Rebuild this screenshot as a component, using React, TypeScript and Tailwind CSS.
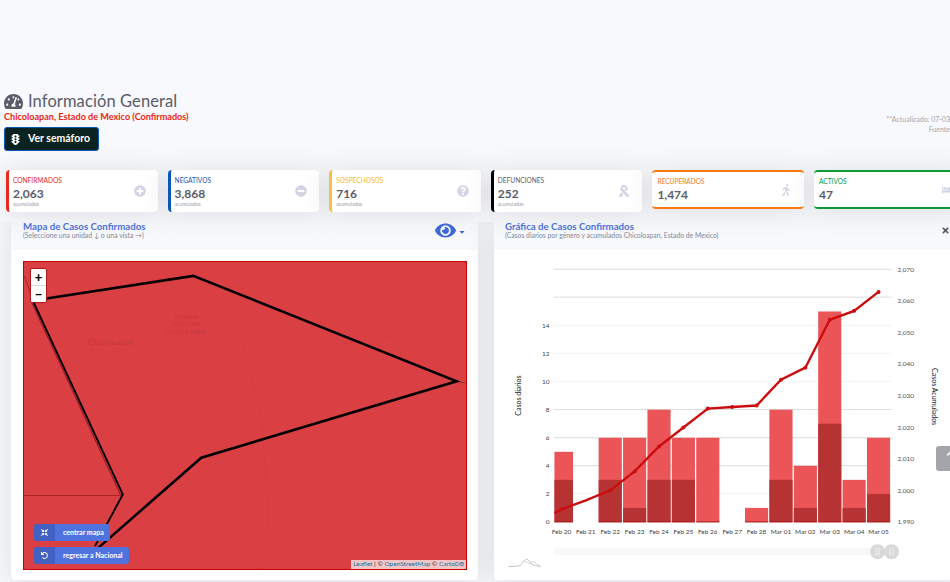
import {
  FaBed,
  FaCaretDown,
  FaChevronUp,
  FaCompressArrowsAlt,
  FaEye,
  FaMinusCircle,
  FaPlusCircle,
  FaQuestionCircle,
  FaRibbon,
  FaTachometerAlt,
  FaTimes,
  FaTrafficLight,
  FaUndo,
  FaWalking,
} from 'react-icons/fa';

const cards = [
  { label: 'CONFIRMADOS', value: '2,063', foot: 'acumulados', icon: FaPlusCircle, box: 'border-l-[3px] border-l-[#e8291c] pl-[4px]', text: 'text-[#e8291c]' },
  { label: 'NEGATIVOS', value: '3,868', foot: 'acumulados', icon: FaMinusCircle, box: 'border-l-[3px] border-l-[#0b57b8] pl-[4px]', text: 'text-[#0b57b8]' },
  { label: 'SOSPECHOSOS', value: '716', foot: 'acumulados', icon: FaQuestionCircle, box: 'border-l-[3px] border-l-[#f6c23e] pl-[4px]', text: 'text-[#f6b92e]' },
  { label: 'DEFUNCIONES', value: '252', foot: 'acumuladas', icon: FaRibbon, box: 'border-l-[3px] border-l-black pl-[4px]', text: 'text-[#5a5c69]' },
  { label: 'RECUPERADOS', value: '1,474', icon: FaWalking, box: 'border-y-2 border-[#fb7a0c] pl-[5px]', text: 'text-[#fb7a0c]' },
  { label: 'ACTIVOS', value: '47', icon: FaBed, box: 'border-y-2 border-[#0a9a3c] pl-[5px]', text: 'text-[#0a9a3c]' },
];

const days = ['Feb 20', 'Feb 21', 'Feb 22', 'Feb 23', 'Feb 24', 'Feb 25', 'Feb 26', 'Feb 27', 'Feb 28', 'Mar 01', 'Mar 02', 'Mar 03', 'Mar 04', 'Mar 05'];
const totals = [5, 0, 6, 6, 8, 6, 6, 0, 1, 8, 4, 15, 3, 6];
const darks = [3, 0, 3, 1, 3, 3, 0, 0, 0, 3, 1, 7, 1, 2];
const lineY = [510, 501, 491, 472, 447, 428, 409, 407.5, 406, 380, 368, 320, 311, 292];
const gridY = [269.3, 297.3, 325.7, 353.7, 381.7, 410, 438.3, 466.3, 494.3];
const rightAxis = ['2,070', '2,060', '2,050', '2,040', '2,030', '2,020', '2,010', '2,000', '1,990'];

const baseY = 522.7;
const unit = 14.07;
const centerX = (i: number) => 561 + i * 24.46;

function StatCard({ card }: { card: (typeof cards)[number] }) {
  const Icon = card.icon;
  return (
    <div className={`flex w-[151.6px] shrink-0 items-center justify-between self-start rounded-[4px] bg-white pr-[12px] shadow-[0_2px_28px_rgba(58,59,69,0.15)] ${card.foot ? 'h-[42px]' : 'h-[39px]'} ${card.box}`}>
      <div className="flex flex-col">
        <span className={`text-[6.6px] font-normal leading-[9px] ${card.text}`}>{card.label}</span>
        <span className="mt-[2px] text-[12px] font-bold leading-[14px] text-[#5a5c69]">{card.value}</span>
        {card.foot && <span className="text-[5px] leading-[6px] text-[#9a9ba5]">{card.foot}</span>}
      </div>
      <Icon className="text-[12px] text-[#d4d5e4]" />
    </div>
  );
}

function MapDrawing() {
  return (
    <svg viewBox="23 261 444 309" className="absolute inset-0 h-full w-full">
      <g fill="none" stroke="#000" strokeOpacity="0.03" strokeWidth="1">
        <path d="M37 325 L105 290" />
        <path d="M23 400 L65 360" />
        <path d="M195 262 L240 330 L262 420 L270 540" />
        <path d="M300 350 L400 335 L467 380" />
        <path d="M290 480 L330 470 L262 570" />
        <path d="M370 470 L467 500" />
      </g>
      <path d="M23 496 L122 496" stroke="#a82226" strokeWidth="1" fill="none" />
      <path d="M23 275 L31 298" stroke="#a82226" strokeWidth="1" fill="none" />
      <path d="M458 381 L467 383" stroke="#8a3436" strokeWidth="1" fill="none" />
      <path d="M30 299 L121 496" stroke="#8f1418" strokeWidth="1" fill="none" transform="translate(-1 0)" />
      <path d="M30.5 300 L193 275 L458 381 L201 458 L97 549" stroke="#000" strokeWidth="2.6" fill="none" />
      <path d="M30.5 298 L122 495 L94 547" stroke="#000" strokeWidth="1.9" fill="none" />
      <g fill="#000" fillOpacity="0.14" fontFamily="Lato, sans-serif" textAnchor="middle">
        <text x="110" y="345" fontSize="8.5">Chicoloapan</text>
        <text x="186" y="318" fontSize="6.5">CIUDAD</text>
        <text x="186" y="325" fontSize="6.5">GALAXIA</text>
        <text x="186" y="333" fontSize="6.5">(CASAS SARE)</text>
      </g>
    </svg>
  );
}

function CaseChart() {
  return (
    <svg viewBox="494 250 456 331" className="block h-[331px] w-[456px]" fontFamily="Lato, sans-serif">
      {gridY.map((y, i) => (
        <line key={y} x1="553" x2="892" y1={y} y2={y} stroke={[2, 3, 4, 8].includes(i) ? '#f3f3f3' : '#dcdcdc'} strokeWidth="1" />
      ))}
      {days.map((day, i) => {
        const left = Math.max(centerX(i) - 11.6, 554);
        const right = Math.min(centerX(i) + 11.6, 891);
        const w = right - left;
        return (
          <g key={day}>
            {totals[i] > 0 && <rect x={left} y={baseY - totals[i] * unit} width={w} height={totals[i] * unit} fill="#ec5558" />}
            {darks[i] > 0 && <rect x={left} y={baseY - darks[i] * unit} width={w} height={darks[i] * unit} fill="#b73233" />}
            {totals[i] > 0 && <line x1={left} x2={right} y1={baseY} y2={baseY} stroke="#a50f12" strokeWidth="1" />}
            <text x={centerX(i)} y="535" fontSize="6.5" textAnchor="middle" fill="#444">{day}</text>
          </g>
        );
      })}
      <polyline
        points={`554,514 ${lineY.map((y, i) => `${centerX(i)},${y}`).join(' ')}`}
        fill="none"
        stroke="#cc0d10"
        strokeWidth="2.4"
      />
      {lineY.map((y, i) =>
        i === 1 ? null : <circle key={i} cx={centerX(i)} cy={y} r="2" fill="#cc0d10" />,
      )}
      {[0, 2, 4, 6, 8, 10, 12, 14].map((n) => (
        <text key={n} x="549" y={baseY - n * unit + 2.5} fontSize="6.5" textAnchor="end" fill="#444">{n}</text>
      ))}
      {rightAxis.map((label, i) => (
        <text key={label} x="898" y={269.3 + i * 31.65 + 2.5} fontSize="6.5" fill="#555">{label}</text>
      ))}
      <text transform="translate(520 396) rotate(-90)" fontSize="7" textAnchor="middle" fill="#222">Casos diarios</text>
      <text transform="translate(933 397) rotate(90)" fontSize="7" textAnchor="middle" fill="#222">Casos Acumulados</text>
      <rect x="554" y="549" width="330" height="7" rx="3" fill="#f7f7f7" />
      {[878, 892].map((x) => (
        <g key={x}>
          <circle cx={x} cy="552.5" r="7.5" fill="#d9d9d9" />
          <line x1={x - 1.5} x2={x - 1.5} y1="548.5" y2="556.5" stroke="#f2f2f2" />
          <line x1={x + 1.5} x2={x + 1.5} y1="548.5" y2="556.5" stroke="#f2f2f2" />
        </g>
      ))}
      <path d="M508 567.5 L518 567 C522 566 523 560 526 560 C529 560 530 566 533 566 L540 567.5" fill="none" stroke="#b5b5b5" strokeWidth="0.8" />
      <path d="M524 562 C527 563 528 566 531 563 C533 561 535 565 540 567" fill="none" stroke="#c8c8c8" strokeWidth="0.8" />
    </svg>
  );
}

export default function App() {
  return (
    <div className="relative h-[582px] w-[950px] overflow-hidden bg-[#f8f9fc] pt-[92px] font-['Lato',sans-serif]">
      {/* Encabezado */}
      <div className="flex justify-between">
        <div className="pl-[4px]">
          <div className="flex h-[19px] items-center gap-[5px] text-[#5a5c69]">
            <FaTachometerAlt className="text-[19px]" />
            <h1 className="text-[16.5px] font-normal leading-[19px] tracking-[0.1px]">Información General</h1>
          </div>
          <p className="text-[9.1px] font-bold leading-[12px] text-[#ee2412]">Chicoloapan, Estado de Mexico (Confirmados)</p>
          <button className="mt-[4px] flex h-[24px] w-[95px] items-center gap-[7px] rounded-[3px] border border-[#0b57b8] bg-[#0a2320] pl-[5px] text-[10.5px] font-bold text-white">
            <FaTrafficLight className="text-[11px]" />
            Ver semáforo
          </button>
        </div>
        <div className="pt-[22px] text-right text-[7px] leading-[10px] text-[#a5a6ae]">
          <div>**Actualizado: 07-03</div>
          <div>Fuente</div>
        </div>
      </div>

      {/* Indicadores */}
      <div className="relative z-10 mt-[8px] flex h-[63px] gap-[10px] bg-[#f8f9fc] pl-[6px] pt-[11px]">
        {cards.map((card) => (
          <StatCard key={card.label} card={card} />
        ))}
      </div>

      {/* Paneles */}
      <div className="flex h-[358px] gap-[16px] pl-[11px]">
        <section className="flex w-[467px] shrink-0 flex-col rounded-b-[4px] bg-white shadow-[0_2px_28px_rgba(58,59,69,0.15)]">
          <header className="flex h-[28px] items-start justify-between bg-[#f8f9fc] pl-[12px] pr-[12.5px]">
            <div>
              <h2 className="text-[9.7px] font-bold leading-[9px] text-[#4e73df]">Mapa de Casos Confirmados</h2>
              <p className="text-[6.9px] leading-[9px] text-[#858796]">(Seleccione una unidad ↓ o una vista →)</p>
            </div>
            <div className="-mt-[2.5px] flex items-center gap-[1.5px] text-[#3f68d8]">
              <FaEye className="text-[21px]" />
              <FaCaretDown className="mt-[3px] text-[8px]" />
            </div>
          </header>
          <div className="pl-[12px] pt-[11px]">
            <div className="relative h-[309px] w-[444px] border border-[#cc0000] bg-[#da3f43]">
              <MapDrawing />
              <div className="absolute left-[6px] top-[6px] flex h-[35px] w-[17px] flex-col rounded-[2px] border border-[#a8181c] bg-white text-black">
                <span className="flex h-[17px] items-center justify-center border-b border-[#ddd] text-[13px] font-black leading-none">+</span>
                <span className="flex flex-1 items-center justify-center text-[13px] font-black leading-none">−</span>
              </div>
              <div className="absolute left-[10px] top-[262px] flex flex-col items-start gap-[6px] text-[7px] font-bold text-white">
                <button className="flex h-[17px] w-[76px] items-center rounded-[3px] bg-[#4e73df]">
                  <span className="flex h-full w-[21px] items-center justify-center rounded-l-[3px] bg-[#4361c2]">
                    <FaCompressArrowsAlt className="text-[7px]" />
                  </span>
                  <span className="pl-[8px]">centrar mapa</span>
                </button>
                <button className="flex h-[17px] w-[95px] items-center rounded-[3px] bg-[#4e73df]">
                  <span className="flex h-full w-[21px] items-center justify-center rounded-l-[3px] bg-[#4361c2]">
                    <FaUndo className="text-[7px]" />
                  </span>
                  <span className="pl-[8px]">regresar a Nacional</span>
                </button>
              </div>
              <div className="absolute bottom-0 right-0 flex h-[9px] w-[115px] items-center justify-center bg-white/70 text-[6.5px] leading-none text-[#333]">
                <span className="text-[#0078a8]">Leaflet</span>&nbsp;| ©&nbsp;<span className="text-[#0078a8]">OpenStreetMap</span>&nbsp;©&nbsp;<span className="text-[#0078a8]">CartoDB</span>
              </div>
            </div>
          </div>
        </section>

        <section className="flex w-[467px] shrink-0 flex-col rounded-b-[4px] bg-white shadow-[0_2px_28px_rgba(58,59,69,0.15)]">
          <header className="flex h-[28px] items-start justify-between bg-[#f8f9fc] pl-[11px] pr-[11px]">
            <div>
              <h2 className="text-[9.7px] font-bold leading-[9px] text-[#4e73df]">Gráfica de Casos Confirmados</h2>
              <p className="text-[6.8px] leading-[9px] text-[#858796]">(Casos diarios por género y acumulados Chicoloapan, Estado de Mexico)</p>
            </div>
            <FaTimes className="mt-[3.5px] text-[9px] text-[#5a5c69]" />
          </header>
          <CaseChart />
        </section>
      </div>

      {/* Volver arriba */}
      <button className="absolute left-[936px] top-[446px] flex h-[25px] w-[28px] items-start justify-center rounded-[3px] bg-[#a4a5aa] pt-[3px] text-white">
        <FaChevronUp className="text-[9px]" />
      </button>
    </div>
  );
}
